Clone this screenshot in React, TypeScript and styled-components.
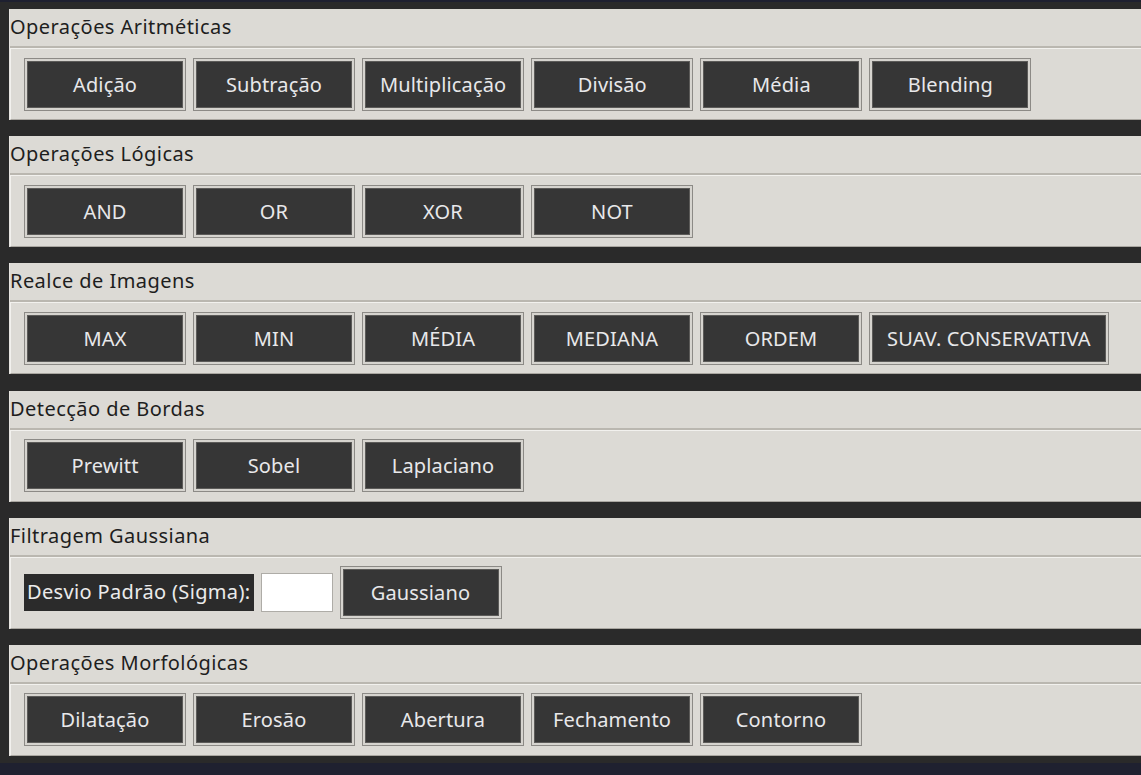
import React, { FC, ReactElement } from 'react';
import styled, { createGlobalStyle } from 'styled-components';

const GlobalStyle = createGlobalStyle`
    html, body {
        margin: 0;
        padding: 0;
        background: #2a2a2a;
    }

    body {
        font-family: "Noto Sans", "Open Sans", sans-serif;
    }
`;

const Window = styled.div`
    width: 1141px;
    height: 775px;
    box-sizing: border-box;
    background: #2a2a2a;
    border-top: 2px solid #1e2030;
    border-bottom: 12px solid #1f2130;
    padding: 7px 0 0 9px;
    display: flex;
    flex-direction: column;
    gap: 16.2px;
    overflow: hidden;
`;

const Panel = styled.section`
    background: #dcdad5;
    border-left: 1px solid #e6e4e0;
    display: flex;
    flex-direction: column;
    flex-shrink: 0;
`;

const Header = styled.div`
    height: 37px;
    line-height: 35px;
    font-size: 20px;
    letter-spacing: 0.45px;
    color: #1e1e1e;
    border-bottom: 2px solid #bab7b0;
    white-space: nowrap;
`;

const Body = styled.div`
    height: 72px;
    box-sizing: border-box;
    border-top: 1px solid #f2f1ee;
    border-left: 1px solid #f2f1ee;
    border-bottom: 1px solid #a9a6a0;
    padding: 0 13px;
    display: flex;
    align-items: center;
    gap: 7px;
`;

const Button = styled.button`
    min-width: 162px;
    height: 53px;
    box-sizing: border-box;
    padding: 0 17px;
    background: #363636;
    color: #e8e8ea;
    font-family: "Noto Sans", "Open Sans", sans-serif;
    font-size: 20px;
    letter-spacing: 0.15px;
    border: 1px solid #8c8a86;
    box-shadow: inset 0 0 0 2px #d6d4cf, inset 0 0 0 3px #5c5b59;
    white-space: nowrap;
    cursor: pointer;
`;

const SigmaLabel = styled.span`
    background: #2b2b2b;
    color: #ebebeb;
    font-size: 20px;
    letter-spacing: 0.35px;
    height: 37px;
    line-height: 36px;
    padding: 0 3px;
    white-space: nowrap;
`;

const SigmaInput = styled.input`
    width: 72px;
    height: 39px;
    box-sizing: border-box;
    background: #ffffff;
    border: 1px solid #aeaca7;
    outline: none;
`;

interface Section {
    title: string;
    buttons: string[];
}

const sections: Section[] = [
    { title: 'Operações Aritméticas', buttons: ['Adição', 'Subtração', 'Multiplicação', 'Divisão', 'Média', 'Blending'] },
    { title: 'Operações Lógicas', buttons: ['AND', 'OR', 'XOR', 'NOT'] },
    { title: 'Realce de Imagens', buttons: ['MAX', 'MIN', 'MÉDIA', 'MEDIANA', 'ORDEM', 'SUAV. CONSERVATIVA'] },
    { title: 'Detecção de Bordas', buttons: ['Prewitt', 'Sobel', 'Laplaciano'] },
];

const morphology = ['Dilatação', 'Erosão', 'Abertura', 'Fechamento', 'Contorno'];

const App: FC = (): ReactElement => (
    <>
        <GlobalStyle />
        <Window>
            {sections.map(({ title, buttons }) => (
                <Panel key={title}>
                    <Header>{title}</Header>
                    <Body>
                        {buttons.map((label) => (
                            <Button key={label}>{label}</Button>
                        ))}
                    </Body>
                </Panel>
            ))}
            <Panel>
                <Header>Filtragem Gaussiana</Header>
                <Body>
                    <SigmaLabel>Desvio Padrão (Sigma):</SigmaLabel>
                    <SigmaInput />
                    <Button>Gaussiano</Button>
                </Body>
            </Panel>
            <Panel>
                <Header>Operações Morfológicas</Header>
                <Body>
                    {morphology.map((label) => (
                        <Button key={label}>{label}</Button>
                    ))}
                </Body>
            </Panel>
        </Window>
    </>
);

export default App;
